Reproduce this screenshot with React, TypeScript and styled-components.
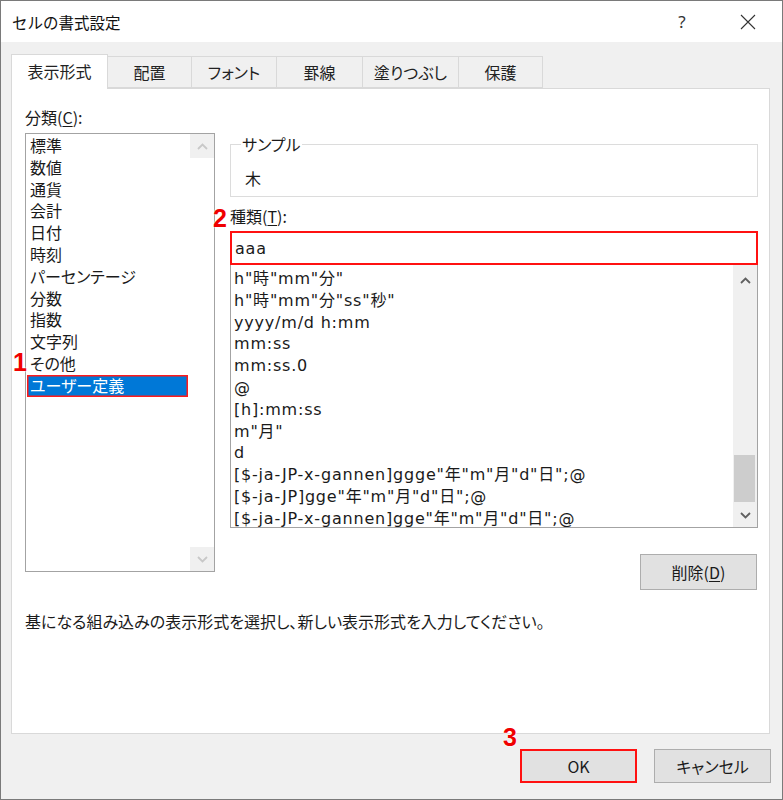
import { FC } from "react";
import styled, { createGlobalStyle } from "styled-components";

const JP = `"Noto Sans CJK JP", "Noto Sans", sans-serif`;
const LATIN = `"DejaVu Sans", "Noto Sans CJK JP", sans-serif`;

const GlobalStyle = createGlobalStyle`
  html, body {
    margin: 0;
    padding: 0;
    background: #ffffff;
  }
  * {
    box-sizing: border-box;
  }
`;

const Window = styled.div`
  position: relative;
  width: 783px;
  height: 800px;
  border: 1px solid #7a7a7a;
  display: flex;
  flex-direction: column;
  font-family: ${JP};
  color: #1a1a1a;
  background: #f0f0f0;
`;

const TitleBar = styled.div`
  height: 41px;
  flex: none;
  background: #ffffff;
  display: flex;
  align-items: center;
  padding-left: 11px;
`;

const Title = styled.div`
  flex: 1;
  font-size: 15.5px;
  color: #111;
`;

const TitleButton = styled.div<{ $w: number }>`
  width: ${(p) => p.$w}px;
  height: 41px;
  display: flex;
  align-items: center;
  justify-content: center;
  color: #333;
  font-size: 17px;
  font-family: "Noto Sans", sans-serif;
`;

const Body = styled.div`
  flex: 1;
  display: flex;
  flex-direction: column;
  padding: 12px 11px 0 10px;
`;

const TabRow = styled.div`
  display: flex;
  align-items: flex-end;
  height: 34px;
  position: relative;
  z-index: 1;
`;

const Tab = styled.div<{ $active?: boolean; $w: number }>`
  width: ${(p) => p.$w}px;
  height: ${(p) => (p.$active ? 35 : 32)}px;
  margin-bottom: ${(p) => (p.$active ? -1 : 0)}px;
  display: flex;
  align-items: center;
  justify-content: center;
  padding-bottom: ${(p) => (p.$active ? 2 : 0)}px;
  font-size: 16px;
  font-feature-settings: "palt";
  color: #222;
  background: ${(p) => (p.$active ? "#ffffff" : "#f0f0f0")};
  border: 1px solid #d9d9d9;
  border-bottom: ${(p) => (p.$active ? "none" : "1px solid #d9d9d9")};
  & + & {
    border-left: none;
  }
`;

const Panel = styled.div`
  width: 759px;
  height: 646px;
  background: #ffffff;
  border: 1px solid #d9d9d9;
  padding: 18px 0 0 13px;
  display: flex;
  flex-direction: column;
`;

const Columns = styled.div`
  display: flex;
  gap: 15px;
`;

const LeftCol = styled.div`
  width: 190px;
  display: flex;
  flex-direction: column;
`;

const RightCol = styled.div`
  width: 528px;
  display: flex;
  flex-direction: column;
  padding-top: 28px;
`;

const Label = styled.div<{ $gap?: number; $top?: number }>`
  height: 20px;
  line-height: 20px;
  font-size: 16px;
  margin-top: ${(p) => p.$top ?? 0}px;
  margin-bottom: ${(p) => p.$gap ?? 6}px;
`;

const U = styled.span`
  text-decoration: underline;
  text-underline-offset: 2px;
`;

const ListBox = styled.div<{ $h: number; $noTop?: boolean }>`
  height: ${(p) => p.$h}px;
  border: 1px solid #a3a3a3;
  border-top: ${(p) => (p.$noTop ? "none" : "1px solid #a3a3a3")};
  background: #ffffff;
  display: flex;
`;

const Items = styled.div<{ $pad: string }>`
  flex: 1;
  padding: ${(p) => p.$pad};
  overflow: hidden;
`;

const Item = styled.div<{ $selected?: boolean; $latin?: boolean }>`
  height: 21.8px;
  line-height: 21.8px;
  font-size: 16px;
  padding-left: ${(p) => (p.$latin ? 2 : 3)}px;
  white-space: nowrap;
  font-family: ${(p) => (p.$latin ? LATIN : JP)};
  letter-spacing: ${(p) => (p.$latin ? "0.8px" : "0")};
  font-feature-settings: "palt";
  color: ${(p) => (p.$selected ? "#ffffff" : "#1a1a1a")};
  background: ${(p) => (p.$selected ? "#0078d7" : "transparent")};
  box-shadow: ${(p) => (p.$selected ? "inset 0 0 0 1.5px #ff1a1a" : "none")};
`;

const ScrollBar = styled.div<{ $track: string }>`
  width: 24px;
  flex: none;
  background: ${(p) => p.$track};
  display: flex;
  flex-direction: column;
`;

const ArrowButton = styled.div<{ $h?: number }>`
  height: ${(p) => p.$h ?? 24}px;
  flex: none;
  display: flex;
  align-items: center;
  justify-content: center;
  background: #f0f0f0;
`;

const Track = styled.div`
  flex: 1;
  display: flex;
  flex-direction: column;
  justify-content: flex-end;
  padding: 0 2px 1px 1px;
`;

const Thumb = styled.div`
  height: 47px;
  background: #cdcdcd;
`;

const GroupBox = styled.fieldset`
  margin: 0;
  padding: 15px 14px 8px 10px;
  border: 1px solid #dcdcdc;
  width: 528px;
  min-width: 0;
`;

const Legend = styled.legend`
  padding: 0 1px;
  font-size: 16px;
  line-height: 18px;
  font-feature-settings: "palt";
`;

const SampleText = styled.div`
  font-size: 16px;
  line-height: 20px;
  padding-left: 4px;
`;

const TypeInput = styled.div`
  height: 34px;
  border: 2px solid #ff1111;
  display: flex;
  align-items: center;
  padding-left: 3px;
  font-family: ${LATIN};
  letter-spacing: 0.8px;
  font-size: 16px;
  background: #ffffff;
`;

const Button = styled.div<{ $mark?: boolean; $h?: number }>`
  width: 117px;
  height: ${(p) => p.$h ?? 34}px;
  background: #e1e1e1;
  border: ${(p) => (p.$mark ? "2px solid #ff1111" : "1px solid #adadad")};
  display: flex;
  align-items: center;
  justify-content: center;
  font-size: 16px;
  font-feature-settings: "palt";
  color: #1a1a1a;
`;

const DeleteRow = styled.div`
  display: flex;
  justify-content: flex-end;
  margin-top: 26px;
  padding-right: 1px;
`;

const Description = styled.div`
  margin-top: 21px;
  font-size: 16px;
  line-height: 20px;
  font-feature-settings: "palt";
`;

const Footer = styled.div`
  display: flex;
  justify-content: flex-end;
  gap: 17px;
  padding-top: 15px;
`;

const Marker = styled.div<{ $x: number; $y: number }>`
  position: absolute;
  left: ${(p) => p.$x}px;
  top: ${(p) => p.$y}px;
  font-family: "Liberation Sans", Arial, sans-serif;
  font-weight: 700;
  font-size: 25px;
  line-height: 25px;
  color: #f00000;
  text-shadow: 0 0 2px #fff, 0 0 2px #fff;
  z-index: 5;
`;

const Chevron: FC<{ dir: "up" | "down"; color: string }> = ({ dir, color }) => (
  <svg width="11" height="7" viewBox="0 0 11 7">
    <path
      d={dir === "up" ? "M1 6 L5.5 1.5 L10 6" : "M1 1 L5.5 5.5 L10 1"}
      fill="none"
      stroke={color}
      strokeWidth="1.8"
    />
  </svg>
);

const CloseIcon = () => (
  <svg width="16" height="16" viewBox="0 0 16 16">
    <path d="M1 1 L15 15 M15 1 L1 15" stroke="#333" strokeWidth="1.1" />
  </svg>
);

const categories = [
  "標準",
  "数値",
  "通貨",
  "会計",
  "日付",
  "時刻",
  "パーセンテージ",
  "分数",
  "指数",
  "文字列",
  "その他",
  "ユーザー定義",
];

const formats = [
  'h"時"mm"分"',
  'h"時"mm"分"ss"秒"',
  "yyyy/m/d h:mm",
  "mm:ss",
  "mm:ss.0",
  "@",
  "[h]:mm:ss",
  'm"月"',
  "d",
  '[$-ja-JP-x-gannen]ggge"年"m"月"d"日";@',
  '[$-ja-JP]gge"年"m"月"d"日";@',
  '[$-ja-JP-x-gannen]gge"年"m"月"d"日";@',
];

const tabs = [
  { label: "表示形式", w: 97 },
  { label: "配置", w: 84 },
  { label: "フォント", w: 85 },
  { label: "罫線", w: 86 },
  { label: "塗りつぶし", w: 96 },
  { label: "保護", w: 84 },
];

const App: FC = () => {
  return (
    <Window>
      <GlobalStyle />
      <TitleBar>
        <Title>セルの書式設定</Title>
        <TitleButton $w={64}>?</TitleButton>
        <TitleButton $w={68}>
          <CloseIcon />
        </TitleButton>
      </TitleBar>

      <Body>
        <TabRow>
          {tabs.map((t, i) => (
            <Tab key={t.label} $w={t.w} $active={i === 0}>
              {t.label}
            </Tab>
          ))}
        </TabRow>

        <Panel>
          <Columns>
            <LeftCol>
              <Label>
                分類(<U>C</U>):
              </Label>
              <ListBox $h={439}>
                <Items $pad="1px 2px 0 1px">
                  {categories.map((c) => (
                    <Item key={c} $selected={c === "ユーザー定義"}>
                      {c}
                    </Item>
                  ))}
                </Items>
                <ScrollBar $track="#ffffff">
                  <ArrowButton>
                    <Chevron dir="up" color="#c8c8c8" />
                  </ArrowButton>
                  <Track />
                  <ArrowButton>
                    <Chevron dir="down" color="#c8c8c8" />
                  </ArrowButton>
                </ScrollBar>
              </ListBox>
            </LeftCol>

            <RightCol>
              <GroupBox>
                <Legend>サンプル</Legend>
                <SampleText>木</SampleText>
              </GroupBox>
              <Label $top={9} $gap={5}>
                種類(<U>T</U>):
              </Label>
              <TypeInput>aaa</TypeInput>
              <ListBox $h={263} $noTop>
                <Items $pad="3px 0 0 1px">
                  {formats.map((f) => (
                    <Item key={f} $latin>
                      {f}
                    </Item>
                  ))}
                </Items>
                <ScrollBar $track="#f0f0f0">
                  <ArrowButton $h={30}>
                    <Chevron dir="up" color="#606060" />
                  </ArrowButton>
                  <Track>
                    <Thumb />
                  </Track>
                  <ArrowButton>
                    <Chevron dir="down" color="#606060" />
                  </ArrowButton>
                </ScrollBar>
              </ListBox>
              <DeleteRow>
                <Button $h={36}>
                  削除(<U>D</U>)
                </Button>
              </DeleteRow>
            </RightCol>
          </Columns>

          <Description>
            基になる組み込みの表示形式を選択し、新しい表示形式を入力してください。
          </Description>
        </Panel>

        <Footer>
          <Button $mark>OK</Button>
          <Button>キャンセル</Button>
        </Footer>
      </Body>

      <Marker $x={12} $y={349}>1</Marker>
      <Marker $x={212} $y={205}>2</Marker>
      <Marker $x={502} $y={724}>3</Marker>
    </Window>
  );
};

export default App;
